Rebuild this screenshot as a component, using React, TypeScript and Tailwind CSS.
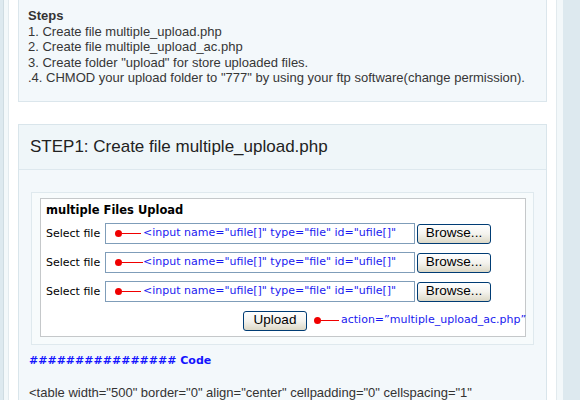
const steps = [
  "1. Create file multiple_upload.php",
  "2. Create file multiple_upload_ac.php",
  '3. Create folder "upload" for store uploaded files.',
  '.4. CHMOD your upload folder to "777" by using your ftp software(change permission).',
];

function Pointer({ line = 19 }: { line?: number }) {
  return (
    <span className="flex items-center shrink-0">
      <span className="w-[7px] h-[7px] rounded-full bg-[#f00000]" />
      <span className="h-px bg-[#f00000]" style={{ width: line }} />
    </span>
  );
}

function XpButton({ label, width }: { label: string; width: string }) {
  return (
    <span
      className={`${width} h-[20px] flex items-center justify-center rounded-[3px] border border-[#003c74] bg-linear-to-b from-white via-[#f4f3ee] to-[#dcd8c6] text-[13.5px] text-black font-['Liberation_Sans',Arial,sans-serif]`}
    >
      {label}
    </span>
  );
}

function FileRow({ gap, line }: { gap: number; line: number }) {
  return (
    <div className="flex items-start h-[21px]">
      <span className="w-[59px] leading-[22px] text-[11px] text-black font-['DejaVu_Sans',Verdana,sans-serif]">
        Select file
      </span>
      <div className="w-[310px] h-[21px] border border-[#7f9db9] bg-white flex items-center pl-[9px]">
        <Pointer line={line} />
        <span
          className="text-[11px] text-[#1a1af0] whitespace-nowrap font-['DejaVu_Sans',Verdana,sans-serif]"
          style={{ marginLeft: gap }}
        >
          {'<input name="ufile[]" type="file" id="ufile[]"'}
        </span>
      </div>
      <div className="ml-[2px] mt-px">
        <XpButton label="Browse..." width="w-[74px]" />
      </div>
    </div>
  );
}

export default function App() {
  return (
    <div className="w-[580px] h-[400px] overflow-hidden bg-[#dde9ef] font-['Liberation_Sans',Arial,sans-serif]">
      <div className="ml-[3px] w-[560px] h-full border-l border-[#cfdce2] bg-[#f3f8fa] pl-[4px]">
        <div className="w-[549px] h-full bg-white border-x border-[#e2eaee] px-[9px]">
          {/* steps box */}
          <div className="border-x border-b border-[#dbe6ec] bg-[#f3f8fb] pl-[9px] pt-[8px] pb-[15px] text-[13px] leading-[15.5px] text-[#363636]">
            <div className="font-bold text-[#333]">Steps</div>
            {steps.map(s => (
              <div key={s} className="whitespace-nowrap">
                {s}
              </div>
            ))}
          </div>

          {/* step 1 */}
          <div className="mt-[22px] border border-[#d9e5eb] bg-[#f3f8fb]">
            <div className="h-[45px] border-b border-[#dde8ee] bg-[#eff6f9] flex items-center pl-[11px] text-[17px] text-[#222]">
              STEP1: Create file multiple_upload.php
            </div>
            <div className="px-[10px] pt-[22px]">
              <div className="ml-[2px] w-[503px] border border-[#dfe9ee] bg-[#f7fbfc] pt-[5px] pl-[8px] pr-[8px] pb-[7px]">
                <div className="w-[486px] border border-[#c5c8ca] bg-white pl-[5px] pt-[4px] pb-[5px]">
                  <div className="text-[11.5px] leading-[14px] font-bold text-black font-['DejaVu_Sans',Verdana,sans-serif]">
                    multiple Files Upload
                  </div>
                  <div className="mt-[6px] flex flex-col gap-[8px]">
                    <FileRow gap={2} line={19} />
                    <FileRow gap={0} line={21} />
                    <FileRow gap={2} line={19} />
                  </div>
                  <div className="mt-[9px] flex items-center">
                    <div className="ml-[197px]">
                      <XpButton label="Upload" width="w-[64px]" />
                    </div>
                    <span className="ml-[7px]">
                      <Pointer line={18} />
                    </span>
                    <span className="ml-[2px] text-[11px] text-[#1a1af0] whitespace-nowrap font-['DejaVu_Sans',Verdana,sans-serif]">
                      action=”multiple_upload_ac.php”
                    </span>
                  </div>
                </div>
              </div>
              <div className="mt-[9px] text-[11px] leading-[14px] font-bold text-[#1414ff] font-['DejaVu_Sans',Verdana,sans-serif]">
                ################ Code
              </div>
              <div className="mt-[17px] text-[13px] leading-[15px] text-[#333] whitespace-nowrap">
                {'<table width="500" border="0" align="center" cellpadding="0" cellspacing="1"'}
              </div>
            </div>
          </div>
        </div>
      </div>
    </div>
  );
}
